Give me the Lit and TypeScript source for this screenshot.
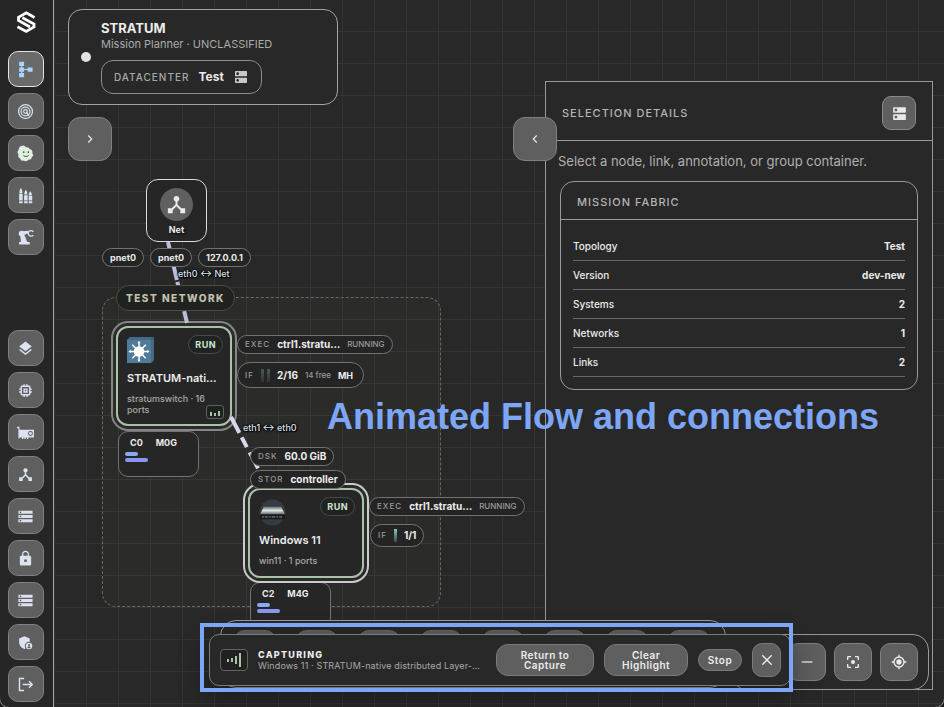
import { LitElement, html, svg, css, nothing } from "lit";
import { customElement, property } from "lit/decorators.js";
import { styleMap } from "lit/directives/style-map.js";

const HUB =
  "M17 16l-4-4V8.82C14.16 8.4 15 7.3 15 6c0-1.66-1.34-3-3-3S9 4.34 9 6c0 1.3.84 2.4 2 2.82V12l-4 4H3v5h5v-3.05l4-4.2 4 4.2V21h5v-5h-4z";
const STORAGE =
  "M2 20h20v-4H2v4zm2-3h2v2H4v-2zM2 4v4h20V4H2zm4 3H4V5h2v2zm-4 7h20v-4H2v4zm2-3h2v2H4v-2z";

const ICONS: Record<string, unknown> = {
  topology: svg`<path d="M3 1h7v6H3zM3 9h7v6H3zM3 17h7v6H3zM15 9h7v6h-7zM5.700 7h1.600v11H5.700zM9 11.200h7v1.600H9z"/>`,
  target: svg`<g fill="none" stroke="currentColor" stroke-width="1.800"><circle cx="12" cy="12" r="9.800"/><circle cx="12" cy="12" r="6.200"/><circle cx="12" cy="12" r="2.600"/><path d="M13 13l4 5"/></g>`,
  cloud: svg`<path d="M6.500 1.500c2-1.800 5-.8 6 1.800 2.500-.8 5 .3 5.500 2.700 3 .5 4.500 3 3.500 5.500 2 1.600 1.800 4.500-.5 5.500-.2 2.500-2.400 4-4.700 3.600-1.400 2.600-4.600 3.100-6.500 1.400-2.500 1-5-.5-5.200-2.900C2 18.500 1 16 2.300 13.500.3 12 .2 8.500 2.500 7.500 1.800 4.500 4 1.500 6.500 1.500z"/><g fill="#3c443c"><circle cx="9.500" cy="10" r="1.200"/><circle cx="16" cy="10" r="1.200"/></g><path d="M9 14.500c2 2.400 5.500 2.400 7.500 0" fill="none" stroke="#3c443c" stroke-width="1.300"/>`,
  ammo: svg`<path d="M5.500 1C7.200 4 7.700 6 7.700 9H3.300C3.300 6 3.800 4 5.500 1zM12.500 4c1.700 2.500 2.200 4 2.200 6.500h-4.400c0-2.500.5-4 2.200-6.500zM18.800 6c1.700 2 2.200 3.500 2.200 5.500h-4.400c0-2 .5-3.500 2.200-5.500zM3 10h5v9H3zM10 11.500h5V19h-5zM16.500 12.500h5V19h-5zM3 20.200h5V23H3zM10 20.200h5V23h-5zM16.500 20.200h5V23h-5z"/>`,
  arm: svg`<path d="M3 18.500h15V22H3zM5.500 18.500l-1-11 5-1 5 12z"/><circle cx="6.500" cy="6.500" r="4"/><path d="M6 3.500l10-1V6l-9 3.500z"/><path d="M23 4c-2-2.500-6-2.200-7 .8-.8 3 1.500 5.400 4.200 5.200 1.300-.1 2-.5 2.800-1.300" fill="none" stroke="currentColor" stroke-width="2"/>`,
  layers: svg`<path d="M11.990 18.540l-7.370-5.730L3 14.070l9 7 9-7-1.630-1.270-7.380 5.740zM12 16l7.360-5.730L21 9l-9-7-9 7 1.630 1.270L12 16z"/>`,
  chip: svg`<path d="M15 9H9v6h6V9zm-2 4h-2v-2h2v2zm8-2V9h-2V7c0-1.100-.9-2-2-2h-2V3h-2v2h-2V3H9v2H7c-1.100 0-2 .9-2 2v2H3v2h2v2H3v2h2v2c0 1.100.9 2 2 2h2v2h2v-2h2v2h2v-2h2c1.100 0 2-.9 2-2v-2h2v-2h-2v-2h2zm-4 6H7V7h10v10z"/>`,
  gpu: svg`<path fill-rule="evenodd" d="M0 4h3.500v4H24v11h-8v2h-2v-2h-1.500v2h-2v-2H9v2H7v-2H3.500v1.500H2V6H0zm19 6a3.500 3.500 0 1 0 0 7 3.500 3.500 0 0 0 0-7zm0 1.400a2.100 2.100 0 1 1 0 4.200 2.100 2.100 0 0 1 0-4.200z"/>`,
  hub: svg`<path d=${HUB}/>`,
  storage: svg`<path d=${STORAGE}/>`,
  lock: svg`<path d="M18 8h-1V6c0-2.760-2.240-5-5-5S7 3.240 7 6v2H6c-1.100 0-2 .9-2 2v10c0 1.100.9 2 2 2h12c1.100 0 2-.9 2-2V10c0-1.100-.9-2-2-2zm-6 9c-1.100 0-2-.9-2-2s.9-2 2-2 2 .9 2 2-.9 2-2 2zm3.100-9H8.900V6c0-1.710 1.390-3.100 3.100-3.100 1.710 0 3.100 1.390 3.100 3.100v2z"/>`,
  admin: svg`<path d="M17 11c.34 0 .67.04 1 .09V6.270L10.500 3 3 6.270v4.910c0 4.540 3.200 8.790 7.500 9.820.55-.13 1.080-.32 1.600-.55-.69-.98-1.100-2.170-1.100-3.450 0-3.310 2.690-6 6-6z"/><path fill-rule="evenodd" d="M17 12.500a4.500 4.500 0 1 0 0 9 4.500 4.500 0 0 0 0-9zm0 1.700a1.500 1.500 0 1 1 0 3 1.500 1.500 0 0 1 0-3zm0 6c-1 0-1.900-.5-2.500-1.300.1-.8 1.700-1.200 2.500-1.200s2.400.4 2.500 1.200c-.6.8-1.500 1.300-2.500 1.300z"/>`,
  logout: svg`<path d="M10 3.500H3.500v17H10M8 12h13M17 7.500l4.500 4.500-4.500 4.500" fill="none" stroke="currentColor" stroke-width="2"/>`,
  dns: svg`<path d="M20 13H4c-.55 0-1 .45-1 1v6c0 .55.45 1 1 1h16c.55 0 1-.45 1-1v-6c0-.55-.45-1-1-1zM7 19c-1.100 0-2-.9-2-2s.9-2 2-2 2 .9 2 2-.9 2-2 2zM20 3H4c-.55 0-1 .45-1 1v6c0 .55.45 1 1 1h16c.55 0 1-.45 1-1V4c0-.55-.45-1-1-1zM7 9c-1.100 0-2-.9-2-2s.9-2 2-2 2 .9 2 2-.9 2-2 2z"/>`,
  right: svg`<path d="M9 6l6 6-6 6" fill="none" stroke="currentColor" stroke-width="2"/>`,
  left: svg`<path d="M15 6l-6 6 6 6" fill="none" stroke="currentColor" stroke-width="2"/>`,
  minus: svg`<path d="M4 11h16v2H4z"/>`,
  plus: svg`<path d="M5 11h6V5h2v6h6v2h-6v6h-2v-6H5z"/>`,
  close: svg`<path d="M5 5l14 14M19 5L5 19" fill="none" stroke="currentColor" stroke-width="2"/>`,
  focus: svg`<path d="M5 15H3v4c0 1.100.9 2 2 2h4v-2H5v-4zM5 5h4V3H5c-1.100 0-2 .9-2 2v4h2V5zm14-2h-4v2h4v4h2V5c0-1.100-.9-2-2-2zm0 16h-4v2h4c1.100 0 2-.9 2-2v-4h-2v4z"/><circle cx="12" cy="12" r="3"/>`,
  locate: svg`<circle cx="12" cy="12" r="4"/><path d="M12 1v4M12 19v4M1 12h4M19 12h4" stroke="currentColor" stroke-width="2"/><circle cx="12" cy="12" r="7.500" fill="none" stroke="currentColor" stroke-width="2"/>`,
};

const icon = (name: string) =>
  html`<svg class="icon" viewBox="0 0 24 24" fill="currentColor" aria-hidden="true">${ICONS[name]}</svg>`;

const at = (x: number, y: number) => styleMap({ left: `${x}px`, top: `${y}px` });

interface Machine {
  name: string;
  detail: string;
  kind: "switch" | "vm";
  x: number;
  y: number;
  height: number;
  cpu: string;
  mem: string;
  capture: boolean;
}

const MACHINES: Machine[] = [
  { name: "STRATUM-nati…", detail: "stratumswitch · 16 ports", kind: "switch", x: 62, y: 326, height: 100, cpu: "C0", mem: "M0G", capture: true },
  { name: "Windows 11", detail: "win11 · 1 ports", kind: "vm", x: 194, y: 488, height: 90, cpu: "C2", mem: "M4G", capture: false },
];

@customElement("side-rail")
class SideRail extends LitElement {
  static styles = css`
    :host {
      display: flex;
      flex-direction: column;
      align-items: flex-start;
      padding: 9px 0 5px 8px;
      border-right: 1px solid #a3a3a3;
      background: #262626;
      box-sizing: border-box;
    }
    .logo { width: 26px; height: 26px; margin: 0 0 16px 6px; }
    nav { display: flex; flex-direction: column; gap: 6px; }
    .lower { margin-top: auto; }
    button {
      width: 36px;
      height: 36px;
      padding: 0 1px 0 0;
      display: grid;
      place-items: center;
      border: 1px solid #808080;
      border-radius: 10px;
      background: #5f5f5f;
      color: #dbe2f0;
    }
    .active { border-color: #e4e4e4; background: #6a6a6a; color: #a9d4fb; }
    .pale { color: #e0f0e0; }
    .icon { width: 17px; height: 17px; display: block; }
  `;

  private item(name: string, label: string, cls = "") {
    return html`<button class=${cls} type="button" aria-label=${label}>${icon(name)}</button>`;
  }

  render() {
    return html`
      <svg class="logo" viewBox="0 0 26 26" fill="none" stroke="#fff" stroke-width="2.800" aria-hidden="true">
        <path d="M20.500 8.500L12.300 3.800 4.500 8.300v3.200L16 18" />
        <path d="M3.500 17.800l8.700 4.700 7.800-4.500v-3L8.500 8.800" />
      </svg>
      <nav aria-label="Workspaces">
        ${this.item("topology", "Topology", "active")} ${this.item("target", "Targets")}
        ${this.item("cloud", "Assistant", "pale")} ${this.item("ammo", "Payloads")}
        ${this.item("arm", "Automation")}
      </nav>
      <nav class="lower" aria-label="Resources">
        ${this.item("layers", "Layers")} ${this.item("chip", "Compute")} ${this.item("gpu", "Graphics")}
        ${this.item("hub", "Networks")} ${this.item("storage", "Storage")} ${this.item("lock", "Security")}
        ${this.item("storage", "Servers")} ${this.item("admin", "Administration")}
        ${this.item("logout", "Sign out")}
      </nav>
    `;
  }
}

@customElement("topology-canvas")
class TopologyCanvas extends LitElement {
  static styles = css`
    :host {
      display: block;
      position: relative;
      overflow: hidden;
      background-color: #282828;
      background-image: linear-gradient(to right, #343434 1px, transparent 1px),
        linear-gradient(to bottom, #343434 1px, transparent 1px);
      background-size: 32px 32px;
      background-position: 0 -1px;
      color: #ececec;
      font-size: 9px;
      line-height: 11px;
    }
    .placed { position: absolute; box-sizing: border-box; }
    .group {
      width: 339px;
      height: 310px;
      border: 1px dashed #6a6b58;
      border-radius: 14px;
      background: rgba(120, 125, 80, 0.05);
    }
    .group-name {
      height: 26px;
      padding: 0 9px;
      border: 1px solid #4c4e3d;
      border-radius: 13px;
      background: #1f2220;
      color: #c4c1ae;
      font-size: 10px;
      font-weight: 800;
      letter-spacing: 0.15em;
      line-height: 24px;
      white-space: nowrap;
    }
    .edges { position: absolute; inset: 0; width: 100%; height: 100%; }
    .edge-name {
      color: #dde3ee;
      font-weight: 500;
      white-space: nowrap;
      text-shadow: 0 0 2px #000, 0 0 2px #000, 0 0 3px #000, 1px 1px 1px #000;
    }
    .net {
      width: 61px;
      height: 63px;
      padding-top: 8px;
      display: flex;
      flex-direction: column;
      align-items: center;
      gap: 3px;
      border: 1px solid #dcdcdc;
      border-radius: 12px;
      background: #262626;
      font-weight: 700;
      text-shadow: 1px 1px 2px #000;
    }
    .disc {
      width: 33px;
      height: 33px;
      display: grid;
      place-items: center;
      border-radius: 50%;
      background: #606060;
    }
    .icon { width: 23px; height: 23px; display: block; }
    .row { display: flex; gap: 6px; }
    .pill {
      height: 19px;
      padding: 0 7px;
      display: flex;
      align-items: center;
      gap: 7px;
      border: 1px solid #727272;
      border-radius: 10px;
      background: #242424;
      box-sizing: border-box;
      font-size: 10px;
      font-weight: 700;
      white-space: nowrap;
    }
    .short { font-size: 9px; }
    .tall { height: 26px; padding-right: 10px; border-radius: 13px; }
    .mid { height: 23px; border-radius: 12px; }
    .key { color: #9b9b9b; font-size: 8px; font-weight: 500; letter-spacing: 1px; }
    .state { color: #9b9b9b; font-size: 8px; font-weight: 500; }
    .meters { display: flex; gap: 3px; }
    .meter { width: 3px; height: 13px; background: linear-gradient(#4a5a58, #2c3534); }
    .hot { background: linear-gradient(#86c4ba, #31504b); }
    .machine {
      width: 116px;
      padding: 7px 7px 0 9px;
      border: 2px solid #a9c3a9;
      border-radius: 12px;
      background: #262626;
      box-shadow: 0 0 0 3px #2a2c2a, 0 0 0 5px #858585;
    }
    .vm { box-shadow: 0 0 0 3px #2a2c2a, 0 0 0 5px #cbcbcb; }
    .top { display: flex; justify-content: space-between; height: 35px; }
    .glyph { width: 27px; height: 27px; margin-top: 2px; }
    .run {
      height: 19px;
      padding: 0 6px;
      border: 1px solid #3f4f45;
      border-radius: 10px;
      box-sizing: border-box;
      background: #202321;
      color: #cfe6cf;
      font-weight: 700;
      letter-spacing: 0.05em;
      line-height: 17px;
    }
    .title { margin: 0; white-space: nowrap; font-size: 11px; font-weight: 600; line-height: 17px; }
    .detail { margin: 6px 0 0; color: #a9a9a9; font-weight: 500; }
    .spark {
      position: absolute;
      right: 6px;
      bottom: 5px;
      width: 18px;
      height: 14px;
      padding: 2px;
      display: flex;
      align-items: flex-end;
      justify-content: center;
      gap: 2px;
      border: 1px solid #53695a;
      border-radius: 3px;
      background: #1e211f;
      box-sizing: border-box;
    }
    .spark i { width: 2px; background: #a9c3a9; }
    .s1 { height: 4px; }
    .s2 { height: 3px; }
    .s3 { height: 5px; }
    .usage {
      width: 81px;
      height: 46px;
      padding: 5px 6px;
      border: 1px solid #727272;
      border-radius: 10px;
      background: #262626;
      font-weight: 700;
    }
    .counts { display: flex; gap: 13px; padding: 0 5px; margin-bottom: 4px; }
    .bar { width: 13px; height: 4px; margin-bottom: 2px; border-radius: 2px; background: #86a8f5; }
    .wide { width: 23px; background: #8b94ee; }
  `;

  private glyph(kind: string) {
    if (kind === "switch") {
      return html`<svg class="glyph" viewBox="0 0 28 28" aria-hidden="true">
        <path d="M0 3l3-3h25v24l-3 3H0z" fill="#466a85" />
        <path d="M0 3h25v24H0z" fill="#527b99" />
        <path d="M25 3l3-3" stroke="#2f4a60" />
        <path d="M12.500 5v20M2.500 15h20M5.500 8l14 14M19.500 8l-14 14" stroke="#fff" stroke-width="1.500" />
        <path d="M11 6.500L12.500 4 14 6.500zM11 23.500l1.500 2.500 1.500-2.500zM4 13.500L1.500 15 4 16.500zM21 13.500l2.500 1.500-2.500 1.500z" fill="#fff" />
        <circle cx="12.500" cy="15" r="5.500" fill="#fff" />
      </svg>`;
    }
    return html`<svg class="glyph" viewBox="0 0 28 28" aria-hidden="true">
      <defs>
        <linearGradient id="shell" x1="0" y1="0" x2="0" y2="1">
          <stop offset="0" stop-color="#6a6f74" />
          <stop offset="0.500" stop-color="#e2e4e6" />
          <stop offset="1" stop-color="#5d6267" />
        </linearGradient>
      </defs>
      <circle cx="14" cy="14" r="13.500" fill="#333c44" />
      <path d="M5 8h18l4 8H1z" fill="url(#shell)" />
      <path d="M1 16h26v5H1z" fill="#17191b" />
      <path d="M3 18.500h2m1 0h3m1 0h2m1 0h4m1 0h2m1 0h3" stroke="#5b6065" stroke-width="2" />
    </svg>`;
  }

  private machine(m: Machine) {
    return html`
      <section class="placed usage" style=${at(m.x + 2, m.kind === "vm" ? m.y + 94 : m.y + 105)}>
        <div class="counts"><span>${m.cpu}</span><span>${m.mem}</span></div>
        <div class="bar"></div>
        <div class="bar wide"></div>
      </section>
      <article
        class="placed machine ${m.kind}"
        style=${styleMap({ left: `${m.x}px`, top: `${m.y}px`, height: `${m.height}px` })}
      >
        <div class="top">${this.glyph(m.kind)}<span class="run">RUN</span></div>
        <h3 class="title">${m.name}</h3>
        <p class="detail">${m.detail}</p>
        ${m.capture
          ? html`<span class="spark"><i class="s1"></i><i class="s2"></i><i class="s3"></i></span>`
          : nothing}
      </article>
      <div class="placed pill" style=${at(m.x + 121, m.y + 9)}>
        <span class="key">EXEC</span><span>ctrl1.stratu…</span><span class="state">RUNNING</span>
      </div>
    `;
  }

  render() {
    return html`
      <div class="placed group" style=${at(48, 297)}></div>
      ${MACHINES.map((m) => this.machine(m))}
      <svg class="edges" aria-hidden="true">
        <path d="M114 242L133 323" stroke="#bdbddb" stroke-width="4" stroke-dasharray="8 17 14 2 6 24 14 20" fill="none" />
        <path d="M177 417L207 474" stroke="#d6d8ee" stroke-width="4" stroke-dasharray="18 5 11 6" fill="none" />
      </svg>
      <div class="placed net" style=${at(92, 179)}>
        <span class="disc">${icon("hub")}</span><span>Net</span>
      </div>
      <div class="placed row" style=${at(48, 248)}>
        <span class="pill short">pnet0</span><span class="pill short">pnet0</span>
        <span class="pill short">127.0.0.1</span>
      </div>
      <span class="placed edge-name" style=${at(124, 268)}>eth0 ↔ Net</span>
      <div class="placed group-name" style=${at(62, 285)}>TEST NETWORK</div>
      <span class="placed edge-name" style=${at(189, 422)}>eth1 ↔ eth0</span>
      <div class="placed pill tall" style=${at(183, 362)}>
        <span class="key">IF</span>
        <span class="meters"><span class="meter"></span><span class="meter"></span></span>
        <span>2/16</span><span class="state">14 free</span><span class="short">MH</span>
      </div>
      <div class="placed pill mid" style=${at(316, 524)}>
        <span class="key">IF</span><span class="meter hot"></span><span>1/1</span>
      </div>
      <div class="placed pill" style=${at(196, 447)}>
        <span class="key">DSK</span><span>60.0 GiB</span>
      </div>
      <div class="placed pill" style=${at(196, 470)}>
        <span class="key">STOR</span><span>controller</span>
      </div>
    `;
  }
}

@customElement("details-panel")
class DetailsPanel extends LitElement {
  static styles = css`
    :host {
      display: block;
      border: 1px solid #9a9a9a;
      background: #282828;
      box-sizing: border-box;
      color: #ececec;
    }
    header {
      display: flex;
      align-items: center;
      justify-content: space-between;
      height: 54px;
      padding: 4px 16px 0;
      border-bottom: 1px solid #9a9a9a;
    }
    h2 { margin: 0; color: #b4b4b4; font-size: 11px; font-weight: 500; letter-spacing: 1px; }
    button {
      width: 34px;
      height: 34px;
      padding: 0;
      display: grid;
      place-items: center;
      border: 1px solid #8a8a8a;
      border-radius: 9px;
      background: #5f5f5f;
      color: #e8e8e8;
    }
    .icon { width: 17px; height: 17px; display: block; }
    .hint { margin: 11px 12px; color: #b0b0b0; font-size: 13px; line-height: 18px; }
    .card { margin: 0 14px; border: 1px solid #9a9a9a; border-radius: 14px; }
    .card h2 { padding: 4px 16px 0; line-height: 33px; border-bottom: 1px solid #9a9a9a; }
    .body { padding: 12px; }
    table { width: 100%; border-collapse: collapse; font-size: 10px; line-height: 14px; }
    th, td { height: 28px; padding: 0; border-bottom: 1px solid #686868; }
    th { text-align: left; font-weight: 500; }
    td { text-align: right; font-weight: 700; }
  `;

  @property({ attribute: false }) rows: [string, string][] = [];

  render() {
    return html`
      <header>
        <h2>SELECTION DETAILS</h2>
        <button type="button" aria-label="Inventory">${icon("dns")}</button>
      </header>
      <p class="hint">Select a node, link, annotation, or group container.</p>
      <section class="card">
        <h2>MISSION FABRIC</h2>
        <div class="body">
          <table>
            <tbody>
              ${this.rows.map(([k, v]) => html`<tr><th scope="row">${k}</th><td>${v}</td></tr>`)}
            </tbody>
          </table>
        </div>
      </section>
    `;
  }
}

@customElement("capture-bar")
class CaptureBar extends LitElement {
  static styles = css`
    :host {
      display: flex;
      align-items: center;
      gap: 10px;
      padding: 8px 9px 8px 10px;
      border: 1px solid #7c7c7c;
      border-radius: 10px;
      background: #282828;
      box-shadow: 0 10px 28px 4px rgba(0, 0, 0, 0.3);
      box-sizing: border-box;
      color: #ececec;
    }
    .signal {
      flex: none;
      width: 28px;
      height: 22px;
      display: flex;
      align-items: center;
      justify-content: center;
      gap: 2px;
      border: 1px solid #606860;
      border-radius: 4px;
      background: #202120;
      box-sizing: border-box;
    }
    .signal i { width: 2px; background: #a9c3a9; }
    .b1 { height: 3px; }
    .b2 { height: 4px; }
    .b3 { height: 8px; }
    .b4 { height: 14px; }
    .text { flex: 1; min-width: 0; line-height: 11px; white-space: nowrap; }
    strong { display: block; font-size: 9px; font-weight: 800; letter-spacing: 0.14em; }
    .what { display: block; color: #a8a8a8; font-size: 9px; letter-spacing: 0.015em; }
    button {
      flex: none;
      height: 32px;
      padding: 0;
      border: 1px solid #7a7a7a;
      border-radius: 12px;
      background: #5f5f5f;
      color: #ececec;
      font: 600 10px/10px Inter, sans-serif;
      letter-spacing: 0.05em;
    }
    .back { width: 98px; padding: 0 20px; }
    .clear { width: 84px; padding: 0 16px; }
    .stop { width: 44px; height: 22px; }
    .x { width: 29px; height: 34px; display: grid; place-items: center; border-radius: 10px; }
    .icon { width: 16px; height: 16px; display: block; }
  `;

  render() {
    return html`
      <span class="signal"><i class="b1"></i><i class="b2"></i><i class="b3"></i><i class="b4"></i></span>
      <div class="text">
        <strong>CAPTURING</strong>
        <span class="what">Windows 11 · STRATUM-native distributed Layer-…</span>
      </div>
      <button class="back" type="button">Return to Capture</button>
      <button class="clear" type="button">Clear Highlight</button>
      <button class="stop" type="button">Stop</button>
      <button class="x" type="button" aria-label="Close">${icon("close")}</button>
    `;
  }
}

@customElement("app-root")
class AppRoot extends LitElement {
  static styles = css`
    :host {
      position: relative;
      overflow: hidden;
      display: grid;
      grid-template-columns: 54px minmax(0, 1fr);
      min-height: 100vh;
      background: #282828;
      font-family: Inter, "Liberation Sans", sans-serif;
      color: #ececec;
    }
    :host::after {
      content: "";
      position: absolute;
      inset: -1px;
      border: 1px solid #8a8a8a;
      border-radius: 0 0 10px 10px;
      box-shadow: 0 0 0 6px #1b1b1b;
      pointer-events: none;
    }
    main { display: grid; grid-template: minmax(0, 1fr) / minmax(0, 1fr); position: relative; }
    topology-canvas, .hud { grid-area: 1 / 1; }
    .hud {
      position: relative;
      display: flex;
      justify-content: space-between;
      align-items: stretch;
    }
    .left { padding: 9px 0 0 14px; display: flex; flex-direction: column; gap: 12px; }
    .brand {
      width: 270px;
      height: 96px;
      padding: 0 12px;
      display: flex;
      align-items: center;
      gap: 10px;
      border: 1px solid #a3a3a3;
      border-radius: 14px;
      background: #282828;
      box-sizing: border-box;
    }
    .id { padding-bottom: 2px; }
    .dot { width: 10px; height: 10px; border-radius: 50%; background: #e2e2e2; }
    h1 { margin: 0; font-size: 13px; font-weight: 700; line-height: 18px; }
    .sub { margin: 0 0 8px; color: #ababab; font-size: 11px; line-height: 15px; }
    .dc {
      height: 34px;
      padding: 0 12px;
      display: flex;
      align-items: center;
      gap: 9px;
      border: 1px solid #8c8c8c;
      border-radius: 12px;
      background: transparent;
      color: #ececec;
      font: 700 12px/16px Inter, sans-serif;
    }
    .dc span { color: #a8a8a8; font-size: 10px; font-weight: 500; letter-spacing: 1px; }
    .dc .icon { width: 16px; height: 16px; color: #c9c9c9; }
    .icon { width: 16px; height: 16px; display: block; }
    .toggle, .tools button, .dock button {
      width: 44px;
      height: 44px;
      padding: 0;
      display: grid;
      place-items: center;
      border: 1px solid #808080;
      border-radius: 12px;
      background: #5f5f5f;
      color: #ececec;
    }
    .toggle .icon { width: 14px; height: 14px; }
    .right { position: relative; display: grid; width: 388px; margin: 81px 11px 17px 0; }
    .right .toggle { position: absolute; left: -32px; top: 36px; }
    .dock, .tools {
      position: absolute;
      display: flex;
      border: 1px solid #9a9a9a;
      border-radius: 16px;
      background: #282828;
      box-sizing: border-box;
    }
    .dock { left: 166px; bottom: 19px; height: 68px; padding: 9px 14px 9px 12px; gap: 18px; }
    .dock button { border-color: #666; background: #5f5f5f; }
    .tools { right: 15px; bottom: 17px; height: 56px; padding: 8px 10px; gap: 8px; }
    .tools button { width: 38px; height: 38px; border-radius: 10px; }
    capture-bar { position: absolute; left: 155px; bottom: 21px; width: 582px; height: 52px; }
    .frame {
      position: absolute;
      left: 146px;
      bottom: 15px;
      width: 593px;
      height: 69px;
      border: 4px solid #7ea6f7;
      box-sizing: border-box;
      pointer-events: none;
    }
    .callout {
      position: absolute;
      left: 273px;
      top: 396px;
      margin: 0;
      color: #7ea6f7;
      font: 700 36px/42px "Liberation Sans", sans-serif;
      white-space: nowrap;
    }
  `;

  private rows: [string, string][] = [
    ["Topology", "Test"],
    ["Version", "dev-new"],
    ["Systems", "2"],
    ["Networks", "1"],
    ["Links", "2"],
  ];

  private palette = ["Select", "Pan", "Link", "Group", "Note", "Shape", "Undo", "Redo"];

  render() {
    return html`
      <side-rail></side-rail>
      <main>
        <topology-canvas></topology-canvas>
        <div class="hud">
          <div class="left">
            <section class="brand">
              <span class="dot"></span>
              <div class="id">
                <h1>STRATUM</h1>
                <p class="sub">Mission Planner · UNCLASSIFIED</p>
                <button class="dc" type="button"><span>DATACENTER</span>Test${icon("dns")}</button>
              </div>
            </section>
            <button class="toggle" type="button" aria-label="Open library">${icon("right")}</button>
          </div>
          <div class="right">
            <details-panel .rows=${this.rows}></details-panel>
            <button class="toggle" type="button" aria-label="Collapse details">${icon("left")}</button>
          </div>
          <div class="dock">
            ${this.palette.map((p) => html`<button type="button" aria-label=${p}></button>`)}
          </div>
          <div class="tools">
            <button type="button" aria-label="Zoom in">${icon("plus")}</button>
            <button type="button" aria-label="Zoom out">${icon("minus")}</button>
            <button type="button" aria-label="Fit view">${icon("focus")}</button>
            <button type="button" aria-label="Center">${icon("locate")}</button>
          </div>
          <capture-bar></capture-bar>
          <div class="frame"></div>
          <p class="callout">Animated Flow and connections</p>
        </div>
      </main>
    `;
  }
}
